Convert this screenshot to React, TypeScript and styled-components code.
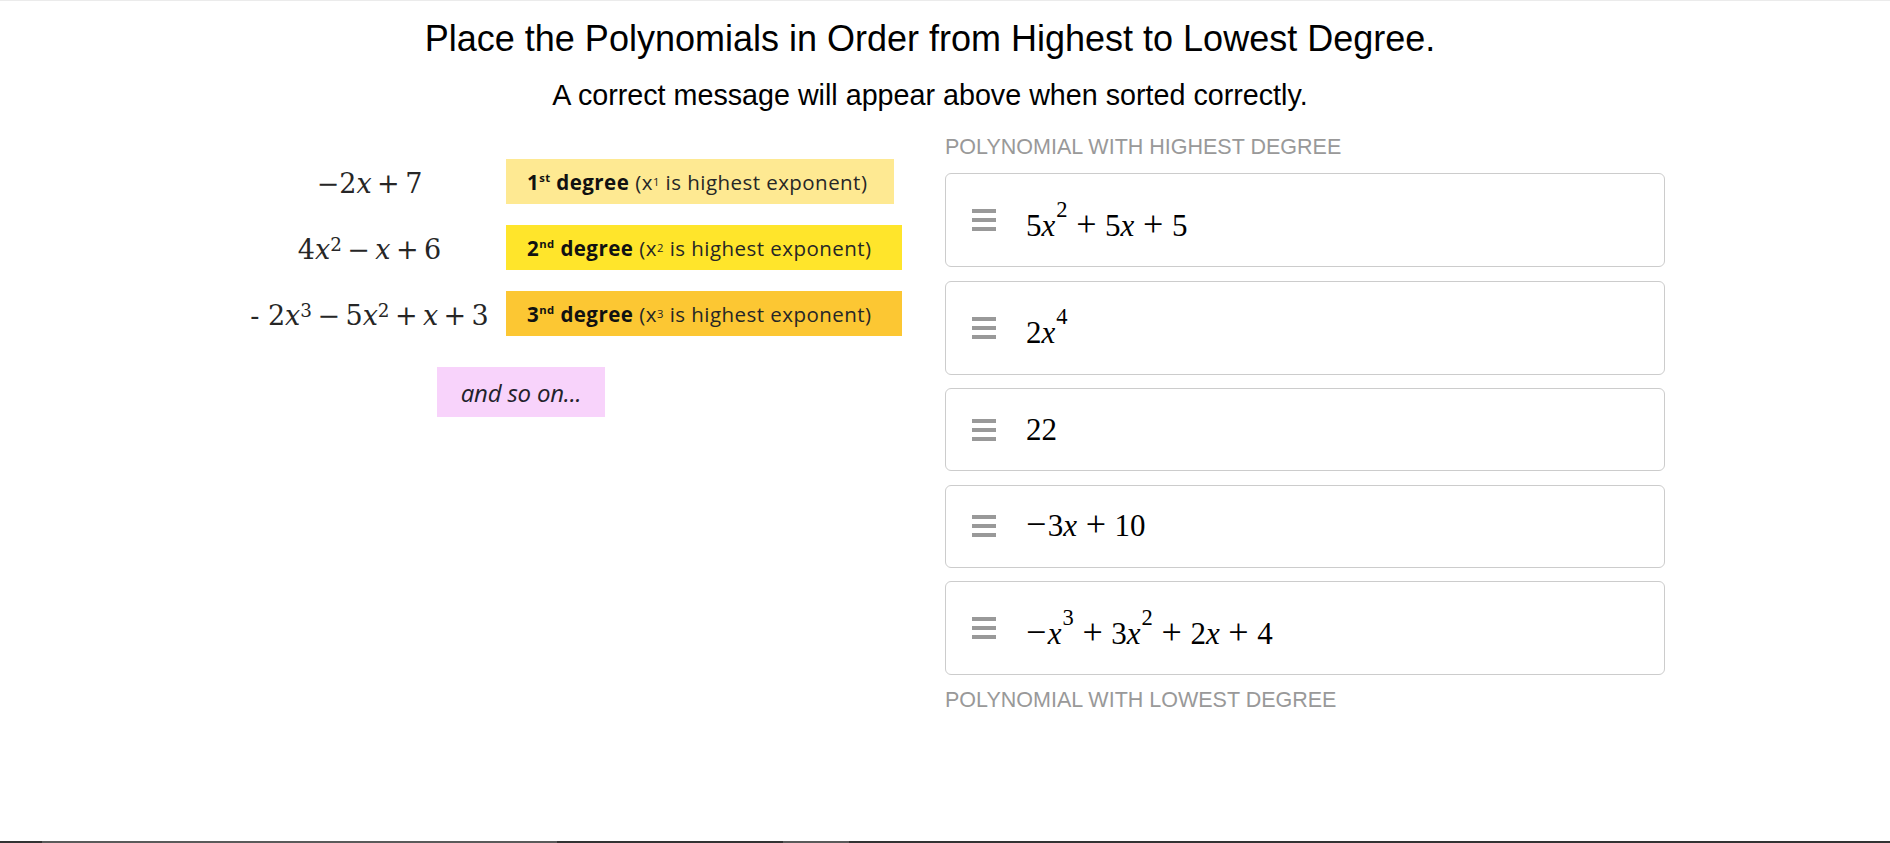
import React from "react";
import styled, { createGlobalStyle } from "styled-components";

const GlobalStyle = createGlobalStyle`
  html, body {
    margin: 0;
    padding: 0;
    background: #ffffff;
  }
  body {
    font-family: "Liberation Sans", Arial, sans-serif;
    color: #000;
  }
  * { box-sizing: border-box; }
`;

const Page = styled.div`
  height: 100vh;
  display: flex;
  flex-direction: column;
  border-top: 1px solid #ebebeb;
`;

const Main = styled.main`
  flex: 1;
  padding: 16px 30px 0 0;
`;

const Title = styled.h1`
  margin: 0;
  font-size: 36px;
  line-height: 44px;
  font-weight: 400;
  text-align: center;
  color: #000;
`;

const Subtitle = styled.p`
  margin: 15.5px 0 0;
  font-size: 28.7px;
  line-height: 36px;
  text-align: center;
  color: #000;
`;

const Section = styled.section`
  margin-top: 22.5px;
  padding-left: 42px;
  display: grid;
  grid-template-columns: 665px 720px;
  column-gap: 43px;
  justify-content: center;
  align-items: start;
`;

/* ---------- left: example picture ---------- */

const ExampleGrid = styled.div`
  padding-top: 24px;
  display: grid;
  grid-template-columns: 265px auto;
  column-gap: 4px;
  row-gap: 21px;
  align-items: center;
  justify-content: start;
`;

const ExampleMath = styled.div`
  font-family: "DejaVu Serif", "Liberation Serif", serif;
  font-size: 27px;
  line-height: 34px;
  color: #262626;
  text-align: center;
  white-space: nowrap;
  padding-top: 4px;
`;

const ExSup = styled.sup`
  font-size: 0.68em;
  line-height: 0;
  vertical-align: 8px;
`;

const ExOp = styled.span`
  margin: 0 0.2em;
`;

const DegreeBox = styled.div<{ $bg: string; $w: number }>`
  width: ${(p) => p.$w}px;
  height: 45px;
  background: ${(p) => p.$bg};
  display: flex;
  align-items: center;
  padding-left: 21px;
  font-family: "Open Sans", "Noto Sans", sans-serif;
  font-size: 20.5px;
  letter-spacing: 0.45px;
  color: #262626;
  white-space: nowrap;
`;

const DegreeStrong = styled.b`
  font-weight: 700;
  color: #111;
  margin-right: 6px;
`;

const TinySup = styled.sup`
  font-size: 0.55em;
  line-height: 0;
  vertical-align: 0.7em;
`;

const MoreNote = styled.div`
  grid-column: 1 / -1;
  justify-self: start;
  margin-top: 10px;
  margin-left: 200px;
  width: 168px;
  height: 50px;
  background: #f8d3fb;
  display: flex;
  align-items: center;
  justify-content: center;
  font-family: "Open Sans", "Noto Sans", sans-serif;
  font-style: italic;
  font-size: 24px;
  letter-spacing: -0.2px;
  color: #22222b;
`;

/* ---------- right: sortable list ---------- */

const SortColumn = styled.div`
  display: flex;
  flex-direction: column;
`;

const ListLabel = styled.div`
  font-size: 21.5px;
  line-height: 24px;
  color: #999999;
  text-transform: uppercase;
  white-space: nowrap;
`;

const List = styled.ul`
  list-style: none;
  margin: 14px 0 13px;
  padding: 0;
  display: flex;
  flex-direction: column;
  gap: 13.5px;
`;

const Card = styled.li`
  display: flex;
  align-items: center;
  gap: 30px;
  border: 1px solid #cccccc;
  border-radius: 6px;
  padding: 21.5px 26px;
  background: #fff;
`;

const Handle = styled.svg`
  flex-shrink: 0;
  display: block;
`;

const MathExpr = styled.div`
  font-family: "Liberation Serif", "Times New Roman", serif;
  font-size: 31px;
  line-height: 38px;
  color: #000;
  white-space: nowrap;
`;

const MSup = styled.span`
  font-size: 22.5px;
  line-height: 27px;
  vertical-align: 19px;
  margin-left: 1px;
`;

const MVar = styled.i`
  font-style: italic;
`;

const MOp = styled.span<{ $unary?: boolean }>`
  font-size: 36px;
  line-height: 0;
  margin: ${(p) => (p.$unary ? "0 0.04em 0 0" : "0 0.24em")};
`;

const StatusStrip = styled.div`
  display: flex;
  height: 2px;
  flex-shrink: 0;
`;

const StripSeg = styled.div<{ $w?: number; $tone: string }>`
  background: ${(p) => p.$tone};
  ${(p) => (p.$w ? `width: ${p.$w}px; flex-shrink: 0;` : "flex: 1;")}
`;

const GripIcon = () => (
  <Handle width="24" height="22" viewBox="0 0 24 22" aria-hidden="true">
    <rect x="0" y="0" width="24" height="4" fill="#999999" />
    <rect x="0" y="9" width="24" height="4" fill="#999999" />
    <rect x="0" y="18" width="24" height="4" fill="#999999" />
  </Handle>
);

const X = () => <MVar>x</MVar>;

const items: React.ReactNode[] = [
  <>
    5<X />
    <MSup>2</MSup>
    <MOp>+</MOp>5<X />
    <MOp>+</MOp>5
  </>,
  <>
    2<X />
    <MSup>4</MSup>
  </>,
  <>22</>,
  <>
    <MOp $unary>−</MOp>3<X />
    <MOp>+</MOp>10
  </>,
  <>
    <MOp $unary>−</MOp>
    <X />
    <MSup>3</MSup>
    <MOp>+</MOp>3<X />
    <MSup>2</MSup>
    <MOp>+</MOp>2<X />
    <MOp>+</MOp>4
  </>,
];

const EX = () => <i>x</i>;

export default function App() {
  return (
    <>
      <GlobalStyle />
      <Page>
        <Main>
          <Title>Place the Polynomials in Order from Highest to Lowest Degree.</Title>
          <Subtitle>A correct message will appear above when sorted correctly.</Subtitle>
          <Section>
            <ExampleGrid>
              <ExampleMath>
                −2<EX />
                <ExOp>+</ExOp>7
              </ExampleMath>
              <DegreeBox $bg="#fee992" $w={388}>
                <DegreeStrong>
                  1<TinySup>st</TinySup> degree
                </DegreeStrong>
                (x<TinySup>1</TinySup>&nbsp;is highest exponent)
              </DegreeBox>

              <ExampleMath>
                4<EX />
                <ExSup>2</ExSup>
                <ExOp>−</ExOp>
                <EX />
                <ExOp>+</ExOp>6
              </ExampleMath>
              <DegreeBox $bg="#ffe52b" $w={396}>
                <DegreeStrong>
                  2<TinySup>nd</TinySup> degree
                </DegreeStrong>
                (x<TinySup>2</TinySup>&nbsp;is highest exponent)
              </DegreeBox>

              <ExampleMath>
                - 2<EX />
                <ExSup>3</ExSup>
                <ExOp>−</ExOp>5<EX />
                <ExSup>2</ExSup>
                <ExOp>+</ExOp>
                <EX />
                <ExOp>+</ExOp>3
              </ExampleMath>
              <DegreeBox $bg="#fcc733" $w={396}>
                <DegreeStrong>
                  3<TinySup>nd</TinySup> degree
                </DegreeStrong>
                (x<TinySup>3</TinySup>&nbsp;is highest exponent)
              </DegreeBox>

              <MoreNote>and so on...</MoreNote>
            </ExampleGrid>

            <SortColumn>
              <ListLabel>Polynomial with highest degree</ListLabel>
              <List>
                {items.map((content, i) => (
                  <Card key={i}>
                    <GripIcon />
                    <MathExpr>{content}</MathExpr>
                  </Card>
                ))}
              </List>
              <ListLabel>Polynomial with lowest degree</ListLabel>
            </SortColumn>
          </Section>
        </Main>
        <StatusStrip>
          <StripSeg $w={42} $tone="#333333" />
          <StripSeg $w={515} $tone="#5a5a5a" />
          <StripSeg $w={226} $tone="#333333" />
          <StripSeg $w={66} $tone="#5a5a5a" />
          <StripSeg $tone="#333333" />
        </StatusStrip>
      </Page>
    </>
  );
}
